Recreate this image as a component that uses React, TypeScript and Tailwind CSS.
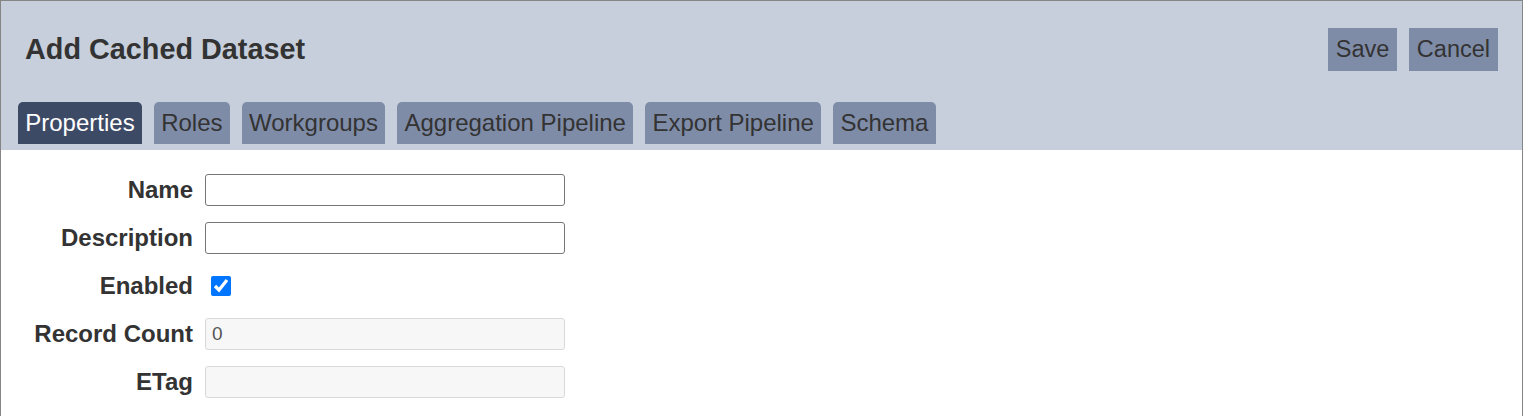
import React from "react";

const tabs = ["Properties", "Roles", "Workgroups", "Aggregation Pipeline", "Export Pipeline", "Schema"];

export default function App() {
  const font = { fontFamily: '"Liberation Sans", Arial, sans-serif' };
  return (
    <div style={font} className="w-[1523px] h-[416px] border border-b-0 border-[#858585] bg-white text-[#333] overflow-hidden">
      <div className="bg-[#c7cfdc] pt-[27px] pb-[6px]">
        <div className="flex items-center justify-between pl-[24px] pr-[24px] h-[43px]">
          <h1 className="text-[28.8px] font-bold leading-none">Add Cached Dataset</h1>
          <div className="flex gap-[12px]">
            <button className="h-[43px] px-[7.5px] bg-[#7f8ca8] text-[23.5px] text-[#333]">Save</button>
            <button className="h-[43px] px-[8px] bg-[#7f8ca8] text-[23.5px] text-[#333]">Cancel</button>
          </div>
        </div>
        <div className="flex gap-[12px] pl-[17px] mt-[31px]">
          {tabs.map((t, i) => (
            <div
              key={t}
              className={
                "h-[42px] px-[7.25px] flex items-center rounded-t-[5px] text-[24px] leading-none " +
                (i === 0 ? "bg-[#3d4a66] text-white" : "bg-[#7f8ca8] text-[#333]")
              }
            >
              {t}
            </div>
          ))}
        </div>
      </div>
      <div className="pt-[24px] grid grid-cols-[192px_360px] gap-x-[12px] gap-y-[16px] items-center">
        <label className="text-right font-bold text-[24px] leading-none -mt-[1px]">Name</label>
        <input className="h-[32px] border border-[#767676] rounded-[3px] px-[6px] text-[19px] outline-none" />
        <label className="text-right font-bold text-[24px] leading-none -mt-[1px]">Description</label>
        <input className="h-[32px] border border-[#767676] rounded-[3px] px-[6px] text-[19px] outline-none" />
        <label className="text-right font-bold text-[24px] leading-none -mt-[1px]">Enabled</label>
        <div className="h-[32px] flex items-center pl-[6px]">
          <input type="checkbox" defaultChecked className="w-[20px] h-[20px] m-0 accent-[#0075ff]" />
        </div>
        <label className="text-right font-bold text-[24px] leading-none -mt-[1px]">Record Count</label>
        <input readOnly value="0" className="h-[32px] border border-[#d9d9d9] bg-[#f7f7f7] rounded-[3px] px-[6px] text-[19px] text-[#555] outline-none" />
        <label className="text-right font-bold text-[24px] leading-none -mt-[1px]">ETag</label>
        <input readOnly value="" className="h-[32px] border border-[#d9d9d9] bg-[#f7f7f7] rounded-[3px] px-[6px] text-[19px] text-[#555] outline-none" />
      </div>
    </div>
  );
}
